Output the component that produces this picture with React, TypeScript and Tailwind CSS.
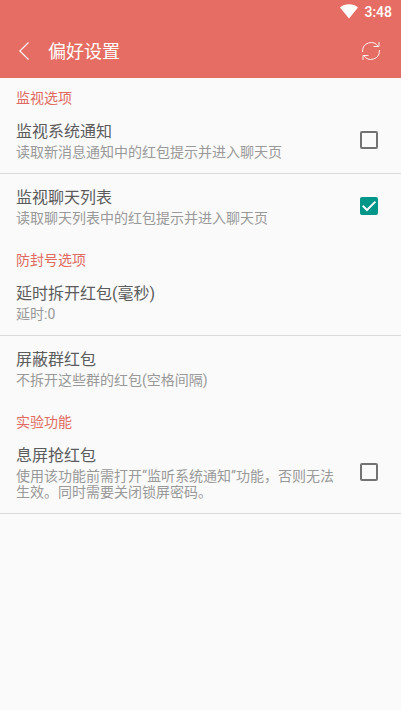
import React from "react";

interface PreferenceProps {
  title: string;
  summary: string;
  checked?: boolean;
  divider?: boolean;
}

function Checkbox({ checked }: { checked: boolean }) {
  return (
    <span
      role="checkbox"
      aria-checked={checked}
      className={
        checked
          ? "block h-[18px] w-[18px] rounded-[2px] bg-[#009688]"
          : "block h-[18px] w-[18px] rounded-[2px] border-2 border-[#737373]"
      }
    >
      {checked && (
        <svg width="18" height="18" viewBox="0 0 18 18" fill="none">
          <path d="M2.7 8.8 7 13 15.4 4.6" stroke="#fafafa" strokeWidth="2" />
        </svg>
      )}
    </span>
  );
}

function Category({ children }: { children: React.ReactNode }) {
  return (
    <h2 className="h-[30px] px-4 pt-[10px] text-sm leading-5 text-[#e06a61]">
      {children}
    </h2>
  );
}

function Preference({ title, summary, checked, divider }: PreferenceProps) {
  return (
    <div
      className={`flex items-center border-b pr-[23px] pl-4 ${
        divider ? "border-[#dadada]" : "border-transparent"
      }`}
    >
      <div className="w-[324px] pt-3 pb-[13px]">
        <h3 className="text-base leading-6 text-[#5c5c5c]">{title}</h3>
        <p className="text-sm leading-4 text-[#999999]">{summary}</p>
      </div>
      {checked !== undefined && (
        <div className="ml-auto pb-px">
          <Checkbox checked={checked} />
        </div>
      )}
    </div>
  );
}

export default function App() {
  return (
    <div className="min-h-screen w-full bg-[#fafafa] font-['Roboto','Noto_Sans_CJK_SC',sans-serif]">
      <header className="h-[78px] bg-[#e66d63] text-white">
        <div className="flex h-6 items-center justify-end pr-[9px]">
          <svg width="18" height="16" viewBox="0 0 18 16" className="mr-1.5">
            <path d="M9 14.4 0 3.4C2.4 1.3 5.5.2 9 .2s6.6 1.1 9 3.2Z" fill="#fff" />
          </svg>
          <span className="text-sm leading-6 font-medium">3:48</span>
        </div>
        <div className="flex h-[54px] items-center pr-5 pl-[19px]">
          <svg
            width="10"
            height="18"
            viewBox="0 0 10 18"
            fill="none"
            stroke="#fff"
            strokeWidth="1.2"
          >
            <path d="M9.5.5.8 9l8.7 8.5" />
          </svg>
          <h1 className="ml-[19px] pt-[2px] text-lg leading-6">偏好设置</h1>
          <svg
            width="20"
            height="20"
            viewBox="0 0 20 20"
            fill="none"
            stroke="#fff"
            strokeOpacity="0.9"
            className="ml-auto"
          >
            <path d="M1.6 11v-1A8.4 8.4 0 0 1 17.1 5.5" />
            <path d="M18 1v4.5h-5.5" />
            <path d="M18.4 9v1A8.4 8.4 0 0 1 2.9 14.5" />
            <path d="M2 19v-4.5h5.5" />
          </svg>
        </div>
      </header>
      <main>
        <Category>监视选项</Category>
        <Preference
          title="监视系统通知"
          summary="读取新消息通知中的红包提示并进入聊天页"
          checked={false}
          divider
        />
        <Preference
          title="监视聊天列表"
          summary="读取聊天列表中的红包提示并进入聊天页"
          checked={true}
        />
        <Category>防封号选项</Category>
        <Preference title="延时拆开红包(毫秒)" summary="延时:0" divider />
        <Preference title="屏蔽群红包" summary="不拆开这些群的红包(空格间隔)" />
        <Category>实验功能</Category>
        <Preference
          title="息屏抢红包"
          summary="使用该功能前需打开“监听系统通知”功能，否则无法生效。同时需要关闭锁屏密码。"
          checked={false}
          divider
        />
      </main>
    </div>
  );
}
